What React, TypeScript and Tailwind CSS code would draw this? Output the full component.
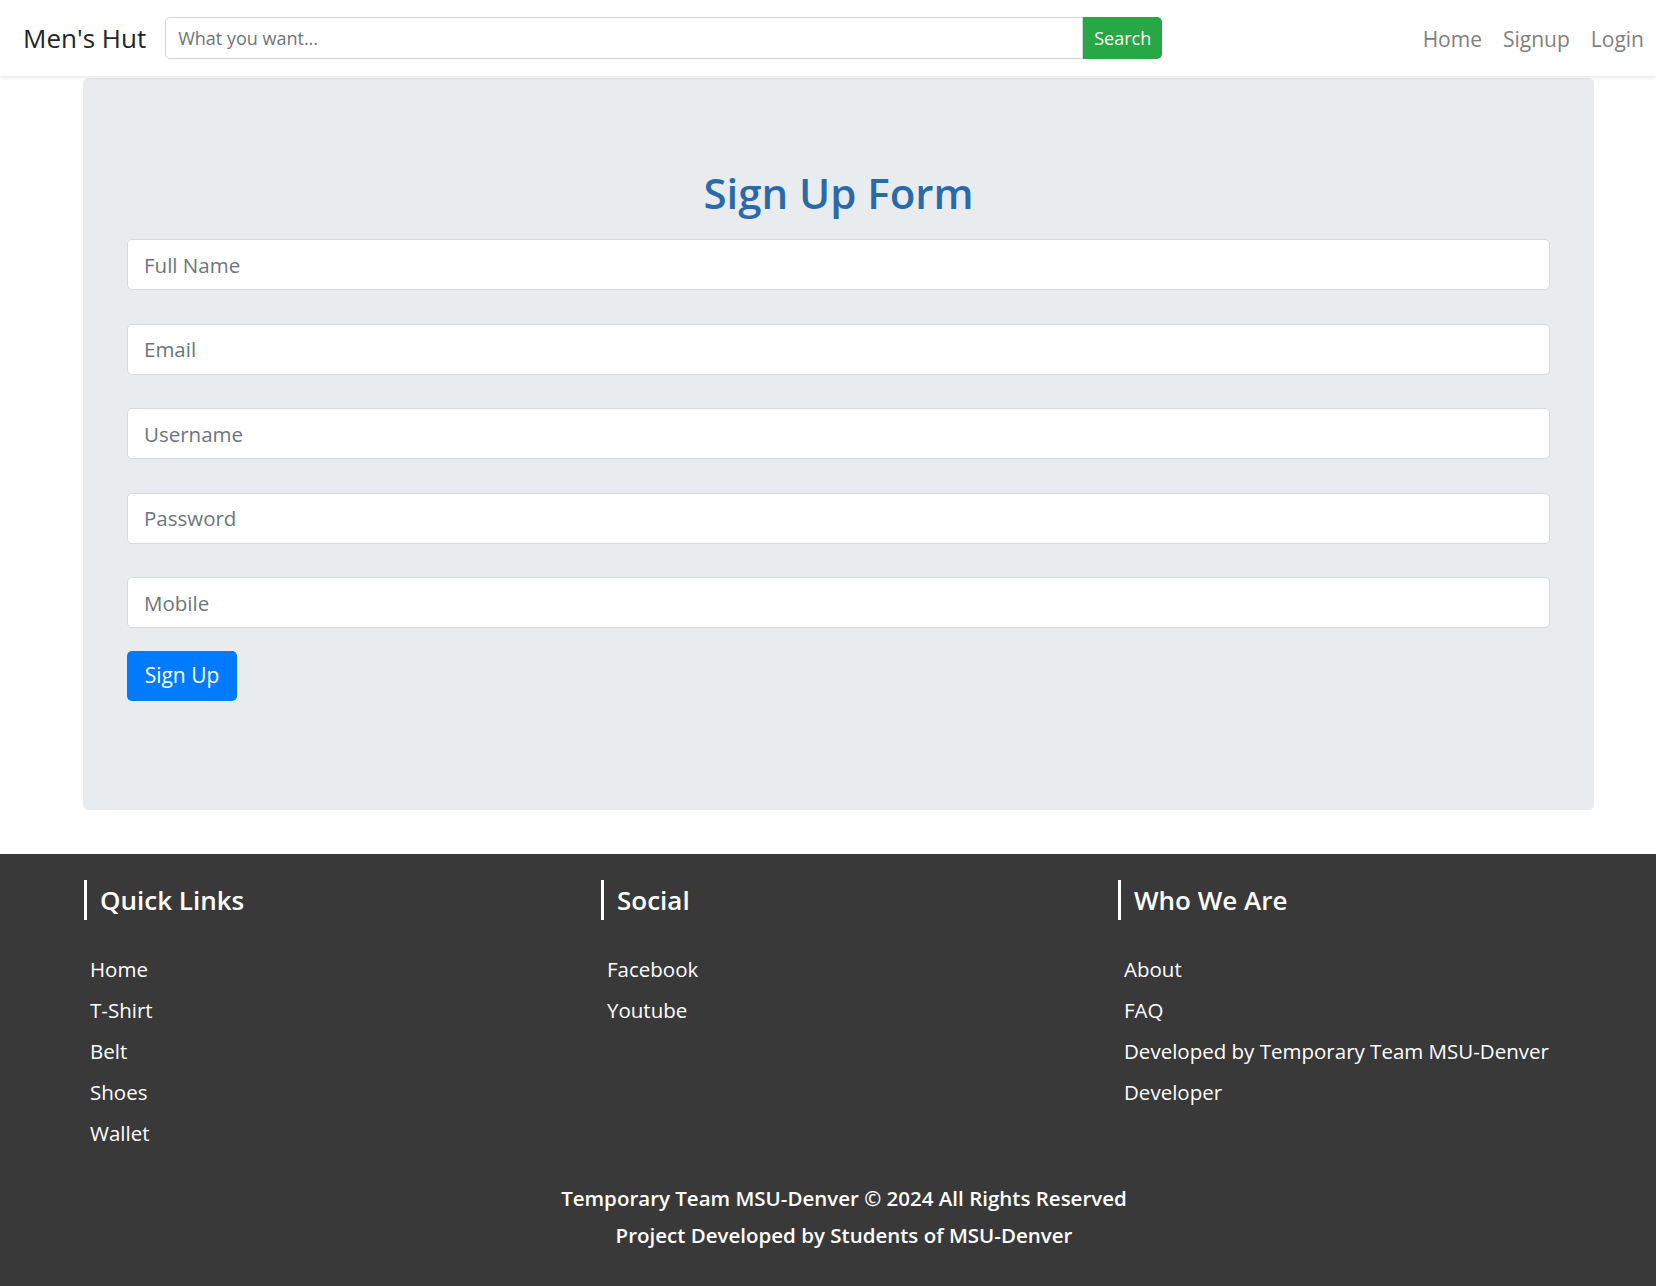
const font = { fontFamily: '"Open Sans", "Noto Sans", sans-serif' };

const fields = ["Full Name", "Email", "Username", "Password", "Mobile"];

const columns = [
  { title: "Quick Links", links: ["Home", "T-Shirt", "Belt", "Shoes", "Wallet"] },
  { title: "Social", links: ["Facebook", "Youtube"] },
  { title: "Who We Are", links: ["About", "FAQ", "Developed by Temporary Team MSU-Denver", "Developer"] },
];

function Navbar() {
  return (
    <nav className="h-[76px] shrink-0 bg-white flex items-center pl-[23px] pr-[12px] shadow-[0_2px_3px_rgba(0,0,0,0.08)] relative z-10">
      <span className="text-[26px] text-[#212529] leading-none mr-[19px]">Men's Hut</span>
      <div className="flex h-[42px]">
        <input
          className="w-[918px] h-full border border-[#ced4da] rounded-l-[5px] px-[12px] text-[18px] text-[#495057] placeholder:text-[#6c757d] outline-none"
          placeholder="What you want..."
        />
        <button className="w-[79px] h-full bg-[#28a745] text-white text-[18px] rounded-r-[5px]">Search</button>
      </div>
      <div className="ml-auto flex gap-[21px] text-[21px] text-[#808080] pt-[3px]">
        <span>Home</span>
        <span>Signup</span>
        <span>Login</span>
      </div>
    </nav>
  );
}

function SignupForm() {
  return (
    <div className="ml-[83px] mr-[62px] mt-[2px] bg-[#e9ecef] rounded-[5px] px-[44px] pt-[88px] pb-[109px]">
      <h1 className="text-center text-[42px] leading-[54px] font-semibold text-[#2b6aa8] mb-[19px]">Sign Up Form</h1>
      <div className="flex flex-col gap-[33.5px]">
        {fields.map((f) => (
          <input
            key={f}
            className="h-[51px] w-full bg-white border border-[#d6dade] rounded-[5px] px-[16px] text-[20.5px] placeholder:text-[#6c757d] outline-none"
            placeholder={f}
            type={f === "Password" ? "password" : "text"}
          />
        ))}
      </div>
      <button className="mt-[23px] w-[110px] h-[50px] bg-[#007bff] text-white text-[21px] rounded-[5px]">Sign Up</button>
    </div>
  );
}

function Footer() {
  return (
    <footer className="flex-1 mt-[44px] bg-[#393939] text-white pt-[26px] pb-[30px]">
      <div className="grid grid-cols-[517px_517px_517px] pl-[84px]">
        {columns.map((c) => (
          <div key={c.title}>
            <h3 className="border-l-[3px] border-white pl-[13px] h-[40px] flex items-center text-[26px] font-semibold">
              {c.title}
            </h3>
            <ul className="mt-[29px] pl-[6px] flex flex-col">
              {c.links.map((l) => (
                <li key={l} className="text-[20.5px] leading-[41px]">{l}</li>
              ))}
            </ul>
          </div>
        ))}
      </div>
      <div className="mt-[26px] pl-[32px] text-center text-[20.5px] font-semibold leading-[37px]">
        <p>Temporary Team MSU-Denver © 2024 All Rights Reserved</p>
        <p>Project Developed by Students of MSU-Denver</p>
      </div>
    </footer>
  );
}

export default function App() {
  return (
    <div style={font} className="min-h-screen flex flex-col bg-white">
      <Navbar />
      <SignupForm />
      <Footer />
    </div>
  );
}
